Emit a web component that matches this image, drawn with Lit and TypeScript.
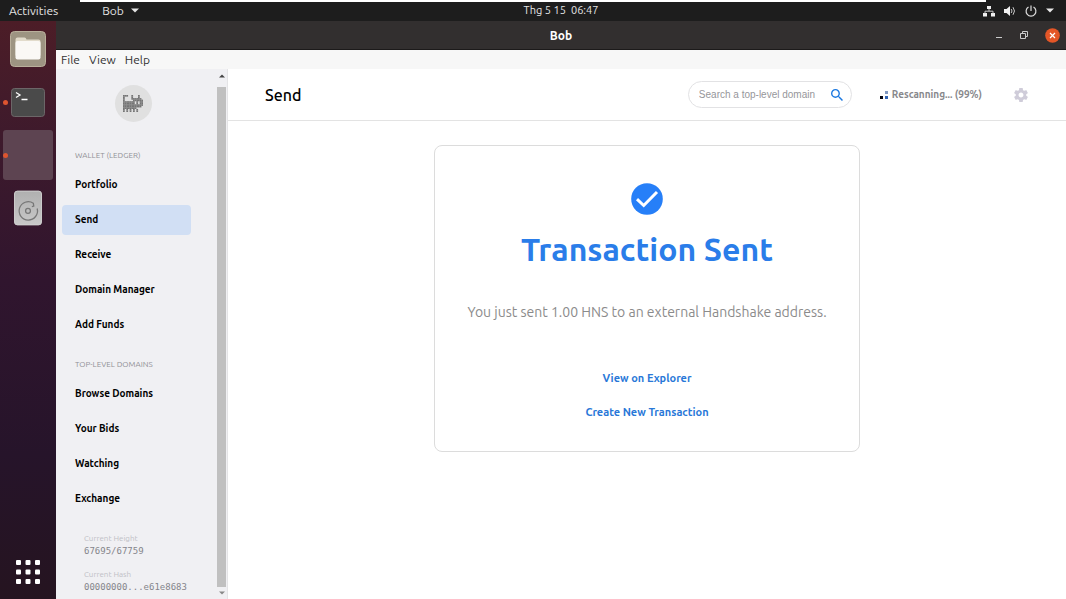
import { LitElement, html, css, svg } from "lit";
import { customElement, state } from "lit/decorators.js";

const WALLET = ["Portfolio", "Send", "Receive", "Domain Manager", "Add Funds"];
const DOMAINS = ["Browse Domains", "Your Bids", "Watching", "Exchange"];

const CAT = [
  "###..#...#..",
  "#....#...#..",
  "#....######.",
  "#.....######",
  "#######.#.##",
  "#######.#.##",
  "############",
  "###########.",
  "########....",
  "#.#.#.#.#...",
  "#.#.#.#.#...",
];

@customElement("desktop-bar")
class DesktopBar extends LitElement {
  static styles = css`
    :host { display: block; background: #1d1d1d; color: #e4e4e4; position: relative; }
    .bar { display: grid; grid-template-columns: 1fr auto 1fr; align-items: center; height: 21px; font-size: 12px; line-height: 21px; }
    .left { display: flex; padding-left: 9px; gap: 44px; }
    .right { display: flex; justify-content: flex-end; align-items: center; gap: 9px; padding-right: 12px; }
    button { all: unset; display: flex; align-items: center; gap: 4px; cursor: pointer; white-space: pre; }
    svg { display: block; }
    .strip { position: absolute; top: 0; left: 80px; right: 80px; height: 2px; background: #fff; }
    .clock { padding-left: 56px; font-size: 11px; }
  `;
  render() {
    return html`
      <div class="strip"></div>
      <div class="bar">
        <div class="left">
          <button>Activities</button>
          <button>Bob <svg width="8" height="5" viewBox="0 0 8 5"><path d="M0 .5h8L4 4.500z" fill="#e4e4e4"/></svg></button>
        </div>
        <button class="clock">Thg 5 15  06:47</button>
        <div class="right">
          <button aria-label="Network"><svg width="12" height="12" viewBox="0 0 12 12"><path d="M4 1h4v3H4zM0 8h4v3.500H0zM8 8h4v3.500H8z" fill="#f0f0f0"/><path d="M6 4v2M2 8.500V6.200h8v2.300" fill="none" stroke="#c8c8c8"/></svg></button>
          <button aria-label="Volume"><svg width="12" height="12" viewBox="0 0 12 12"><path d="M0 4h2.500L6 1v10L2.500 8H0z" fill="#f0f0f0"/><path d="M7.200 4q1.600 2 0 4M9 2.200q3 3.800 0 7.600" stroke="#c8c8c8" fill="none"/></svg></button>
          <button aria-label="Power"><svg width="12" height="12" viewBox="0 0 12 12" fill="none" stroke="#ddd" stroke-width="1.200"><path d="M3.500 2A4.900 4.900 0 1 0 8.500 2M6 .5V6"/></svg></button>
          <button aria-label="System menu"><svg width="8" height="5" viewBox="0 0 8 5"><path d="M0 .5h8L4 4.500z" fill="#e8e8e8"/></svg></button>
        </div>
      </div>`;
  }
}

@customElement("app-dock")
class AppDock extends LitElement {
  static styles = css`
    :host { display: flex; flex-direction: column; align-items: center; width: 56px; flex: none; box-sizing: border-box; padding: 3px 0 2px;
      background: linear-gradient(#4c1d27 0, #3e1a2c 20%, #30152e 45%, #26142a 75%, #251420 100%); }
    button { all: unset; width: 50px; height: 50px; display: grid; place-items: center; position: relative; border-radius: 3px; margin-bottom: 3px; cursor: pointer; }
    .active { background: #5d4451; }
    .running::before { content: ""; position: absolute; left: 0; top: 23px; width: 5px; height: 5px; border-radius: 50%; background: #dd5530; }
    .grid { margin: auto 0 0; }
    svg { display: block; }
  `;
  render() {
    return html`
      <button aria-label="Files"><svg width="36" height="36" viewBox="0 0 36 36"><rect x=".5" y=".5" width="35" height="35" rx="4" fill="#9d9482" stroke="#b9af9b"/><path d="M5.500 8.500q0-2 2-2h7q1.500 0 2 2h12q2 0 2 2v14H5.500z" fill="#e2dbcb"/><rect x="5.500" y="10" width="25" height="18.500" rx="2" fill="#faf8f5"/></svg></button>
      <button class="running" aria-label="Terminal"><svg width="34" height="29" viewBox="0 0 34 29"><rect x=".5" y=".5" width="33" height="28" rx="3" fill="#4a4a4a" stroke="#6c6668"/><path d="M5 4.500l4 2.500-4 2.500M10.500 11.500h6" stroke="#fff" stroke-width="1.300" fill="none"/></svg></button>
      <button class="active running" aria-label="Bob"></button>
      <button aria-label="Disk"><svg width="28" height="36" viewBox="0 0 29 36"><defs><linearGradient id="d" x2="0" y2="1"><stop stop-color="#b0b0b0"/><stop offset="1" stop-color="#c8c8c8"/></linearGradient></defs><rect x=".5" y=".5" width="28" height="35" rx="3" fill="url(#d)" stroke="#d0d0d0"/><g fill="none" stroke="#777" stroke-width="1.300"><path d="M24 18.500A9.500 9.500 0 1 1 20 13l.5 3-2 .5"/><circle cx="14.500" cy="21" r="2.500"/></g></svg></button>
      <button class="grid" aria-label="Show applications"><svg width="24" height="24" viewBox="0 0 24 24" fill="#fff">
        ${[0, 1, 2, 3, 4, 5, 6, 7, 8].map((i) => svg`<rect x=${(i % 3) * 9.5} y=${Math.floor(i / 3) * 9.5} width="5" height="5" rx="1"/>`)}
      </svg></button>`;
  }
}

@customElement("wallet-sidebar")
class WalletSidebar extends LitElement {
  @state() selected = "Send";
  static styles = css`
    :host { display: flex; background: #f0f0f3; width: 172px; box-sizing: border-box; flex: none; border-right: 1px solid #e4e4e6; min-height: 0; overflow: hidden; }
    .body { flex: 1; min-width: 0; display: flex; flex-direction: column; padding: 16px 26px 0 6px; }
    .avatar { width: 37px; height: 37px; border-radius: 50%; background: #e0e0e0; display: grid; place-items: center; align-self: center; margin-left: 13px; flex: none; }
    h2 { margin: 0; padding-left: 13px; font-size: 8px; line-height: 12px; font-weight: 400; color: #909096; }
    h2.first { margin-top: 28px; }
    h2.second { margin-top: 19px; }
    nav { display: flex; flex-direction: column; gap: 5px; margin-top: 8px; }
    a { color: #000; text-decoration: none; font-size: 10px; font-weight: 700; height: 30px; line-height: 30px; padding-left: 13px; border-radius: 4px; white-space: nowrap; }
    a.on { background: #d1dff4; }
    dl { margin: 19px 0 0 22px; font-size: 8px; line-height: 12px; color: #c0c0c6; }
    dd { margin: 0 0 12px; font: 9px/12px "DejaVu Sans Mono", monospace; color: #85858b; }
    .scroll { width: 10px; flex: none; display: flex; flex-direction: column; align-items: center; padding: 5px 1px 4px 0; box-sizing: border-box; gap: 4px; }
    .thumb { flex: 1; width: 9px; background: #c0c0c0; margin-top: 5px; }
    .scroll svg { display: block; flex: none; }
  `;
  link(name: string) {
    return html`<a href="#" class=${name === this.selected ? "on" : ""} @click=${(e: Event) => { e.preventDefault(); this.selected = name; }}>${name}</a>`;
  }
  render() {
    return html`
      <div class="body">
        <div class="avatar"><svg width="20" height="17" viewBox="0 0 12 11" preserveAspectRatio="none" fill="#757575">
          ${CAT.flatMap((row, y) => [...row].map((c, x) => c === "#" ? svg`<rect x=${x} y=${y} width="1.050" height="1.050"/>` : ""))}
        </svg></div>
        <h2 class="first">WALLET (LEDGER)</h2>
        <nav>${WALLET.map((n) => this.link(n))}</nav>
        <h2 class="second">TOP-LEVEL DOMAINS</h2>
        <nav>${DOMAINS.map((n) => this.link(n))}</nav>
        <dl><dt>Current Height</dt><dd>67695/67759</dd><dt>Current Hash</dt><dd>00000000...e61e8683</dd></dl>
      </div>
      <div class="scroll">
        <svg width="6" height="4" viewBox="0 0 6 4"><path d="M0 3.500L3 .5l3 3z" fill="#444"/></svg>
        <div class="thumb"></div>
        <svg width="6" height="4" viewBox="0 0 6 4"><path d="M0 .5h6l-3 3z" fill="#888"/></svg>
      </div>`;
  }
}

@customElement("send-page")
class SendPage extends LitElement {
  static styles = css`
    :host { display: flex; flex-direction: column; flex: 1; min-width: 0; background: #fff; }
    header { display: flex; align-items: center; height: 51px; border-bottom: 1px solid #e3e3e3; padding: 0 38px 0 37px; }
    h1 { font-size: 16px; font-weight: 500; margin: 0 auto 0 0; color: #000; }
    .search { display: flex; align-items: center; width: 164px; height: 27px; box-sizing: border-box; border: 1px solid #e2e2e4; border-radius: 14px; padding: 0 8px 0 10px; }
    input { border: 0; outline: 0; padding: 0; background: none; flex: 1; min-width: 0; font: 10px "Liberation Sans", sans-serif; }
    input::placeholder { color: #96969a; opacity: 1; }
    button { all: unset; display: block; cursor: pointer; }
    svg { display: block; }
    .sync { display: flex; align-items: center; gap: 4px; margin: 0 32px 0 28px; font-size: 10px; font-weight: 700; color: #88888c; }
    main { display: flex; justify-content: center; padding: 24px; }
    .card { width: 426px; box-sizing: border-box; border: 1px solid #dcdcdc; border-radius: 8px; display: flex; flex-direction: column; align-items: center; padding: 37px 12px 30px; text-align: center; }
    h2 { margin: 13px 0 0; font-size: 32px; line-height: 42px; font-weight: 700; color: #2a7de9; white-space: nowrap; }
    p { margin: 30px 0 45px; font-size: 14px; line-height: 24px; color: #8b8b8b; white-space: nowrap; }
    .card a { font-size: 11px; line-height: 18px; font-weight: 700; color: #2978d8; text-decoration: none; margin-bottom: 16px; }
    .card a:last-child { margin-bottom: 0; }
  `;
  render() {
    return html`
      <header>
        <h1>Send</h1>
        <div class="search">
          <input type="text" aria-label="Search a top-level domain" placeholder="Search a top-level domain" />
          <button aria-label="Search"><svg width="12" height="12" viewBox="3 3 17.500 17.500" fill="#1b78e0"><path d="M15.500 14h-.79l-.28-.27A6.470 6.470 0 0 0 16 9.500 6.500 6.500 0 1 0 9.500 16c1.610 0 3.090-.59 4.230-1.570l.27.28v.79l5 4.990L20.490 19l-4.990-5zm-6 0C7.010 14 5 11.990 5 9.500S7.010 5 9.500 5 14 7.010 14 9.500 11.990 14 9.500 14z"/></svg></button>
        </div>
        <div class="sync"><svg width="8" height="8" viewBox="0 0 8 8"><rect x="5" width="3" height="3" fill="#8098c0"/><rect y="5" width="3" height="3" fill="#050510"/><rect x="5" y="5" width="3" height="3" fill="#3264b4"/></svg><span>Rescanning... (99%)</span></div>
        <button aria-label="Settings"><svg width="14" height="14" viewBox="2 2 20 20" fill="#cfccd9"><path d="M19.430 12.980c.04-.32.07-.64.07-.98s-.03-.66-.07-.98l2.110-1.650c.19-.15.24-.42.12-.64l-2-3.460c-.12-.22-.39-.3-.61-.22l-2.490 1c-.52-.4-1.080-.73-1.690-.98l-.38-2.650C14.460 2.180 14.250 2 14 2h-4c-.25 0-.46.18-.49.42l-.38 2.650c-.61.25-1.170.59-1.690.98l-2.490-1c-.23-.09-.49 0-.61.22l-2 3.460c-.13.22-.07.49.12.64l2.110 1.650c-.04.32-.07.65-.07.98s.03.66.07.98l-2.110 1.650c-.19.15-.24.42-.12.64l2 3.460c.12.22.39.3.61.22l2.490-1c.52.4 1.080.73 1.690.98l.38 2.650c.03.24.24.42.49.42h4c.25 0 .46-.18.49-.42l.38-2.650c.61-.25 1.170-.59 1.690-.98l2.490 1c.23.09.49 0 .61-.22l2-3.460c.12-.22.07-.49-.12-.64l-2.110-1.650zM12 15.500c-1.930 0-3.500-1.570-3.500-3.500s1.570-3.500 3.500-3.500 3.500 1.570 3.500 3.500-1.570 3.500-3.500 3.500z"/></svg></button>
      </header>
      <main>
        <section class="card">
          <svg width="32" height="32" viewBox="0 0 32 32"><circle cx="16" cy="16" r="15.800" fill="#267ff8"/><path d="M6 16.200l6.700 6.300L26 9" fill="none" stroke="#fff" stroke-width="3"/></svg>
          <h2>Transaction Sent</h2>
          <p>You just sent 1.00 HNS to an external Handshake address.</p>
          <a href="#">View on Explorer</a>
          <a href="#">Create New Transaction</a>
        </section>
      </main>`;
  }
}

@customElement("app-root")
class AppRoot extends LitElement {
  static styles = css`
    :host { display: flex; flex-direction: column; height: 100vh; overflow: hidden; font-family: Ubuntu, "Noto Sans", sans-serif; }
    .desk { display: flex; flex: 1; min-height: 0; }
    .window { flex: 1; min-width: 0; display: flex; flex-direction: column; background: #f7f7f7; }
    .title { display: grid; grid-template-columns: 1fr auto 1fr; align-items: center; height: 29px; flex: none; box-sizing: border-box; background: #322f2f; border-bottom: 1px solid #1c1a1a; color: #fff; font-size: 12px; font-weight: 700; }
    .title span { grid-column: 2; }
    .controls { display: flex; justify-content: flex-end; align-items: center; gap: 17px; padding-right: 6px; }
    button { all: unset; cursor: pointer; }
    svg { display: block; }
    .menu { display: flex; gap: 9px; height: 19px; line-height: 20px; padding-left: 5px; font-size: 12px; color: #333; flex: none; }
    .content { display: flex; flex: 1; min-height: 0; }
  `;
  render() {
    return html`
      <desktop-bar></desktop-bar>
      <div class="desk">
        <app-dock></app-dock>
        <div class="window">
          <div class="title">
            <span>Bob</span>
            <div class="controls">
              <button aria-label="Minimize"><svg width="8" height="8" viewBox="0 0 8 8"><path d="M1 6.500h6" stroke="#ccc"/></svg></button>
              <button aria-label="Restore"><svg width="8" height="8" viewBox="0 0 8 8" fill="none" stroke="#ccc"><path d="M.5 2.500h5v5h-5zM2.500 2V.5h5v5H6"/></svg></button>
              <button aria-label="Close"><svg width="15" height="15" viewBox="0 0 15 15"><circle cx="7.500" cy="7.500" r="7.300" fill="#e45627"/><path d="M5 5l5 5M10 5l-5 5" stroke="#fff" stroke-width="1.200"/></svg></button>
            </div>
          </div>
          <div class="menu"><button>File</button><button>View</button><button>Help</button></div>
          <div class="content">
            <wallet-sidebar></wallet-sidebar>
            <send-page></send-page>
          </div>
        </div>
      </div>`;
  }
}
